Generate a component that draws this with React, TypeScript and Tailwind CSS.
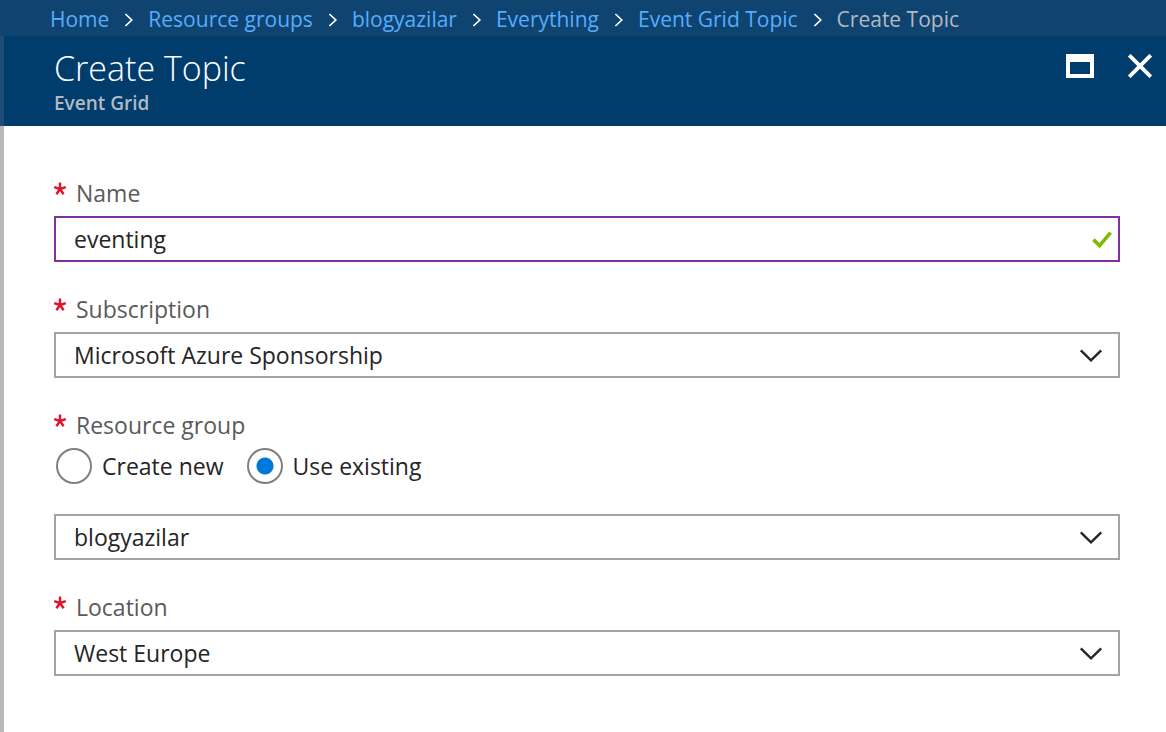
import { Fragment, useState, type ReactNode } from "react";

const trail = ["Home", "Resource groups", "blogyazilar", "Everything", "Event Grid Topic"];

function Separator() {
  return (
    <svg className="h-4 w-[7px] shrink-0 overflow-visible text-white" viewBox="0 0 7 16" fill="none" stroke="currentColor" strokeWidth="1.7" aria-hidden="true">
      <path d="M0.4 2 L6.8 8 L0.4 14" />
    </svg>
  );
}

function Required() {
  return (
    <svg className="mb-2 h-3 w-3 shrink-0 overflow-visible text-[#e3122b]" viewBox="0 0 12 12" fill="none" stroke="currentColor" strokeWidth="2.4" aria-hidden="true">
      <path d="M6 -0.4 V6 M0.2 4.1 L6 6 M11.8 4.1 L6 6 M2.4 11.2 L6 6 M9.6 11.2 L6 6" />
    </svg>
  );
}

function LabelText({ children }: { children: ReactNode }) {
  return (
    <span className="flex h-8 items-center gap-2.5 leading-8 text-[#5a5a5a]">
      <Required />
      {children}
    </span>
  );
}

function Dropdown({ id, label, value }: { id: string; label?: string; value: string }) {
  return (
    <div className="relative">
      <select
        id={id}
        aria-label={label}
        defaultValue={value}
        className="block h-[46px] w-full appearance-none border-2 border-[#a3a3a3] bg-white pr-14 pl-[18px] text-[#252525] outline-none"
      >
        <option>{value}</option>
      </select>
      <svg className="pointer-events-none absolute inset-y-0 right-[17px] my-auto h-4 w-6 text-[#252525]" viewBox="0 0 24 16" fill="none" stroke="currentColor" strokeWidth="2.4" aria-hidden="true">
        <path d="M1.8 3.4 L12 13.4 L22.2 3.4" />
      </svg>
    </div>
  );
}

function Choice({ label, checked, onSelect }: { label: string; checked: boolean; onSelect: () => void }) {
  return (
    <label className="flex items-center gap-2.5 text-[#252525]">
      <input
        type="radio"
        name="resource-group-mode"
        checked={checked}
        onChange={onSelect}
        className="size-9 appearance-none rounded-full border-2 border-[#808080] bg-white checked:bg-[radial-gradient(circle,#0078d7_8px,white_9px)]"
      />
      {label}
    </label>
  );
}

export default function App() {
  const [name, setName] = useState("eventing");
  const [mode, setMode] = useState("existing");

  return (
    <div className="flex min-h-screen flex-col bg-white font-['Open_Sans','Noto_Sans',sans-serif] text-[23px]">
      <nav aria-label="Breadcrumb" className="flex h-9 items-center gap-4 bg-[#0f4470] pt-[3px] pl-[50px] text-[21px] whitespace-nowrap">
        {trail.map((item) => (
          <Fragment key={item}>
            <a href="#" className="text-[#55adff]">{item}</a>
            <Separator />
          </Fragment>
        ))}
        <span className="text-[#b3b9c2]">Create Topic</span>
      </nav>

      <header className="flex h-[90px] items-start justify-between border-l-4 border-[#1d4d77] bg-[#003c6c] pr-3.5 pl-[50px]">
        <div className="pt-[11px]">
          <h1 className="text-[34px] leading-[42px] font-light text-white">Create Topic</h1>
          <p className="text-[19px] leading-7 font-semibold text-[#b3b9c2]">Event Grid</p>
        </div>
        <div className="flex items-center gap-[34px] pt-[18px] text-white">
          <button type="button" aria-label="Maximize">
            <svg className="h-6 w-7" viewBox="0 0 28 24" aria-hidden="true">
              <path fill="currentColor" fillRule="evenodd" d="M0 0 H28 V24 H0 Z M4 8 V20 H24 V8 Z" />
            </svg>
          </button>
          <button type="button" aria-label="Close">
            <svg className="size-6" viewBox="0 0 24 24" fill="none" stroke="currentColor" strokeWidth="3.8" aria-hidden="true">
              <path d="M1.2 1.2 L22.8 22.8 M22.8 1.2 L1.2 22.8" />
            </svg>
          </button>
        </div>
      </header>

      <form className="flex grow flex-col gap-[31px] border-l-4 border-[#b9b9b9] pt-[51px] pr-[46px] pb-14 pl-[50px]">
        <div className="flex flex-col gap-[7px]">
          <label htmlFor="name"><LabelText>Name</LabelText></label>
          <div className="relative">
            <input
              id="name"
              type="text"
              value={name}
              onChange={(e) => setName(e.target.value)}
              className="block h-[46px] w-full border-2 border-[#8230a0] bg-white pr-12 pl-[18px] text-[#252525] outline-none"
            />
            <svg className="pointer-events-none absolute inset-y-0 right-2 my-auto h-[18px] w-5 text-[#7fba00]" viewBox="0 0 20 18" fill="none" stroke="currentColor" strokeWidth="3.6" aria-hidden="true">
              <path d="M1.4 9.6 L7.6 15.6 L18.6 2.6" />
            </svg>
          </div>
        </div>

        <div className="flex flex-col gap-[7px]">
          <label htmlFor="subscription"><LabelText>Subscription</LabelText></label>
          <Dropdown id="subscription" value="Microsoft Azure Sponsorship" />
        </div>

        <fieldset>
          <legend><LabelText>Resource group</LabelText></legend>
          <div className="flex gap-[23px] pt-[7px] pb-[30px] pl-0.5">
            <Choice label="Create new" checked={mode === "new"} onSelect={() => setMode("new")} />
            <Choice label="Use existing" checked={mode === "existing"} onSelect={() => setMode("existing")} />
          </div>
          <Dropdown id="resource-group" label="Resource group" value="blogyazilar" />
        </fieldset>

        <div className="flex flex-col gap-[7px]">
          <label htmlFor="location"><LabelText>Location</LabelText></label>
          <Dropdown id="location" value="West Europe" />
        </div>
      </form>
    </div>
  );
}
